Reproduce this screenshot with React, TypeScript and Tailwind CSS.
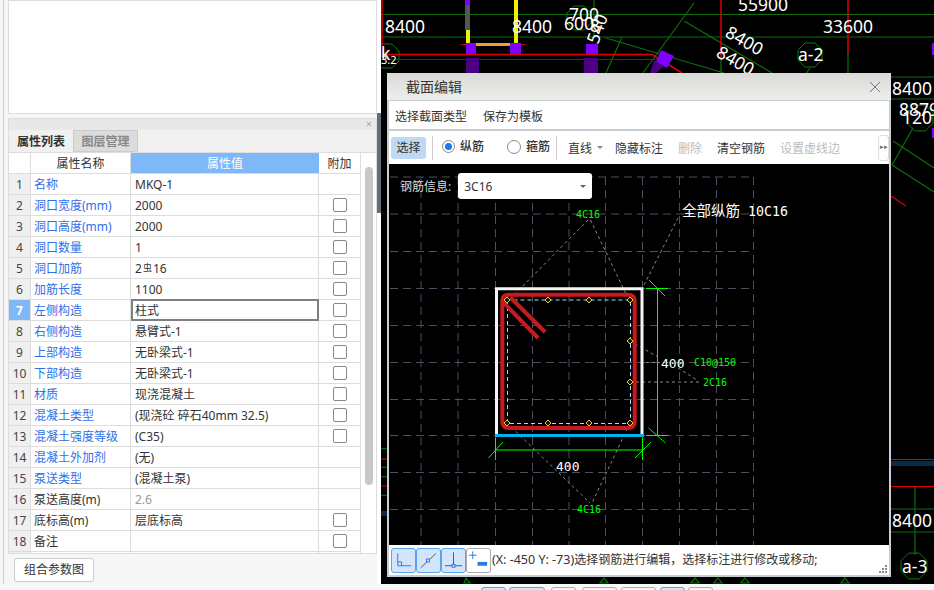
const rows: { name: string; value: string; plain?: boolean; check: boolean }[] = [
  { name: "名称", value: "MKQ-1", check: false },
  { name: "洞口宽度(mm)", value: "2000", check: true },
  { name: "洞口高度(mm)", value: "2000", check: true },
  { name: "洞口数量", value: "1", check: true },
  { name: "洞口加筋", value: "rebar", check: true },
  { name: "加筋长度", value: "1100", check: true },
  { name: "左侧构造", value: "柱式", check: true },
  { name: "右侧构造", value: "悬臂式-1", check: true },
  { name: "上部构造", value: "无卧梁式-1", check: true },
  { name: "下部构造", value: "无卧梁式-1", check: true },
  { name: "材质", value: "现浇混凝土", check: true },
  { name: "混凝土类型", value: "(现浇砼 碎石40mm 32.5)", check: true },
  { name: "混凝土强度等级", value: "(C35)", check: true },
  { name: "混凝土外加剂", value: "(无)", check: false },
  { name: "泵送类型", value: "(混凝土泵)", check: false },
  { name: "泵送高度(m)", value: "2.6", plain: true, check: false },
  { name: "底标高(m)", value: "层底标高", plain: true, check: true },
  { name: "备注", value: "", plain: true, check: true },
];

const cadFont = "'DejaVu Sans Mono','Noto Sans CJK SC',monospace";
const planFont = "'Noto Sans','Noto Sans CJK SC',sans-serif";

const Hex = ({ cx, cy, r }: { cx: number; cy: number; r: number }) => {
  const pts = [0, 1, 2, 3, 4, 5, 6, 7]
    .map((i) => {
      const a = (i * Math.PI) / 4 + Math.PI / 8;
      return `${cx + r * Math.cos(a)},${cy + r * Math.sin(a)}`;
    })
    .join(" ");
  return <polygon points={pts} fill="none" stroke="#0c7a0c" strokeWidth="1" />;
};

const PlanText = ({ x, y, t, rot }: { x: number; y: number; t: string; rot?: number }) => (
  <text
    x={x}
    y={y}
    fill="#fff"
    fontSize="17.5"
    fontFamily={planFont}
    transform={rot ? `rotate(${rot} ${x} ${y})` : undefined}
  >
    {t}
  </text>
);

// 背景平面图
const Plan = () => (
  <svg viewBox="381 0 553 584" className="block w-[553px] h-[584px]">
    <rect x="381" y="0" width="553" height="584" fill="#000" />
    <g stroke="#0c6e0c" strokeWidth="1.2" fill="none">
      <path d="M381 14.5H934M381 37H934M890 77H934M890 99H934M890 509H934M890 532H934" />
      <path d="M848 54V73M721 60V73M594 0V37M606 38L724 73M684 21L772 73M622 37L606 73" />
      <path d="M694 3L643 73M810 68L803 78" />
      <path d="M893 141L934 168M892 165L934 192M892 165L913 128M915 487V555" />
      <path d="M466 578L470 583H464ZM604 578L608 583H600ZM695 578L699 583H691ZM718 578L722 583H714ZM745 578L749 583H741ZM845 578L849 583H841Z" />
    </g>
    <Hex cx={810} cy={55} r={13} />
    <Hex cx={920} cy={118} r={14} />
    <Hex cx={914} cy={566} r={14} />
    <Hex cx={387} cy={56} r={13} />
    <Hex cx={579} cy={18} r={13} />
    <Hex cx={383} cy={458} r={10} />
    <Hex cx={383} cy={486} r={10} />
    <g stroke="#e00000" fill="none">
      <path d="M382 0V56M721 0V60M848 0V54" strokeWidth="1.5" />
      <path d="M381 54.5H652L682 73" strokeWidth="1.5" />
      <path d="M381 59.5H670" strokeWidth="1" stroke="#a00000" />
      <path d="M461 44.5H525" strokeWidth="1" />
      <path d="M890 459.5H934M890 486.5H934M381 459H387M381 486H387" strokeWidth="1.2" />
      <path d="M891 196L906 206" strokeWidth="1.2" />
    </g>
    <rect x="890" y="461" width="44" height="5" fill="#0a2a4a" />
    <rect x="381" y="511" width="8" height="5" fill="#0a2a4a" />
    <rect x="466" y="43" width="10" height="11" fill="#8000ff" />
    <rect x="510" y="43" width="11" height="11" fill="#8000ff" />
    <rect x="586" y="44" width="12" height="10" fill="#8000ff" />
    <rect x="466" y="58" width="13" height="15" fill="#4b0082" />
    <rect x="584" y="58" width="14" height="15" fill="#4b0082" />
    <polygon points="661,50 674,56 667,68 656,62" fill="#8000ff" />
    <polygon points="654,60 664,66 656,73 650,73" fill="#4b0082" />
    <rect x="932" y="43" width="2" height="12" fill="#8000ff" />
    <rect x="932" y="128" width="2" height="10" fill="#8000ff" />
    <rect x="465" y="0" width="5" height="5" fill="#8000ff" />
    <rect x="465" y="5" width="5" height="25" fill="#555" />
    <rect x="466" y="30" width="4" height="13" fill="#f0f000" />
    <rect x="514" y="0" width="4" height="43" fill="#f0f000" />
    <rect x="476" y="43" width="34" height="3" fill="#f0a030" />
    <PlanText x={385} y={33} t="8400" />
    <PlanText x={512} y={33} t="8400" />
    <PlanText x={569} y={21} t="700" />
    <PlanText x={564} y={30} t="600" />
    <PlanText x={590} y={32} t="8" />
    <PlanText x={598} y={45} t="540" rot={-70} />
    <PlanText x={738} y={11} t="55900" />
    <PlanText x={823} y={33} t="33600" />
    <PlanText x={724} y={36} t="8400" rot={30} />
    <PlanText x={715} y={56} t="8400" rot={30} />
    <PlanText x={798} y={61} t="a-2" />
    <PlanText x={892} y={95} t="8400" />
    <PlanText x={899} y={116} t="8879" />
    <PlanText x={902} y={124} t="120" />
    <PlanText x={892} y={527} t="8400" />
    <PlanText x={902} y={573} t="a-3" />
    <PlanText x={381} y={60} t="k" />
    <text x="381" y="64" fill="#fff" fontSize="11" fontFamily={planFont}>
      3.2
    </text>
  </svg>
);

const gridX = [421, 458, 495.5, 532.5, 569, 605.5, 642.5, 679.5, 716.5, 753.5];
const gridY = [177, 214, 251.5, 288.5, 325.5, 362.5, 399.5, 435.5, 472.5, 509.5];
const dots: [number, number][] = [
  [507, 300], [548, 300], [589, 300], [630, 300], [630, 341], [630, 382],
  [507, 423], [548, 423], [589, 423], [630, 423],
];

// 截面图
const Section = () => (
  <svg viewBox="389 164 500 381" className="block w-[500px] h-[381px]">
    <rect x="389" y="164" width="500" height="381" fill="#000" />
    <g stroke="#4a5060" strokeWidth="1" strokeDasharray="8 5" fill="none">
      {gridX.map((x) => (
        <path key={x} d={`M${x} 177V545`} />
      ))}
      {gridY.map((y) => (
        <path key={y} d={`M390 ${y}H754`} />
      ))}
    </g>
    <g stroke="#8a8a8a" strokeWidth="1" strokeDasharray="3 3" fill="none">
      <path d="M588 220L510 299M590.5 220L627 296M678 218L643 287" />
      <path d="M630 341L658 357M678 368L697 380M630 382H700M646 362.5H660" />
      <path d="M507 423L590 503M630 423L592 503" />
    </g>
    <path d="M496.5 435V288.8H642V435" fill="none" stroke="#f5f5f5" strokeWidth="3" />
    <rect x="495" y="434" width="149" height="3" fill="#00b0f0" />
    <g stroke="#aad8ff" strokeWidth="1" strokeDasharray="4 3" fill="none">
      <path d="M507.5 300V423.5H630.5V300H507.5" />
    </g>
    <g stroke="#c8191f" strokeWidth="4" fill="none" strokeLinejoin="round">
      <path d="M509 294.7H628Q634.7 294.7 634.7 301V421Q634.7 428 628 428H509Q502.3 428 502.3 421V301Q502.3 294.7 509 294.7Z" />
      <path d="M503 302L538 338M511 298L545 332" />
    </g>
    {dots.map(([x, y]) => (
      <polygon
        key={`${x}-${y}`}
        points={`${x - 3},${y} ${x},${y - 3} ${x + 3},${y} ${x},${y + 3}`}
        fill="#111"
        stroke="#f0d020"
        strokeWidth="1"
      />
    ))}
    <g stroke="#00ff00" strokeWidth="1" fill="none">
      <path d="M657.5 288V435M646 288.5H668M649 280L665 296M646 435.5H668M648.5 428L665.5 443" />
      <path d="M495.5 450H642.5M495.5 438V460M642.5 438V460M488.5 458L503 442M635 458L651 442" />
    </g>
    <g fontFamily={cadFont}>
      <text x="682" y="216" fill="#fff" fontSize="13.3">
        <tspan fontSize="14.5">全部纵筋</tspan> 10C16
      </text>
      <text x="661" y="368" fill="#fff" fontSize="13">400</text>
      <text x="556" y="471" fill="#fff" fontSize="13">400</text>
      <g fill="#00ff00" fontSize="10">
        <text x="576" y="218">4C16</text>
        <text x="577" y="513">4C16</text>
        <text x="694" y="366">C10@150</text>
        <text x="703" y="386">2C16</text>
      </g>
    </g>
  </svg>
);

const ToolIcon = ({ kind }: { kind: number }) => (
  <svg viewBox="0 0 24 24" className="w-[24px] h-[24px]" fill="none" stroke="#555">
    {kind === 0 && <path d="M6 5V18H20M6 14H10V18" stroke="#2a7ae0" />}
    {kind === 1 && (
      <>
        <path d="M4 20L20 5" />
        <rect x="10" y="11" width="3" height="3" fill="#d3e5fb" stroke="#2a7ae0" />
      </>
    )}
    {kind === 2 && (
      <>
        <path d="M12 4V17M3 18H21" />
        <rect x="10.5" y="16.5" width="3" height="3" fill="#d3e5fb" stroke="#2a7ae0" />
      </>
    )}
    {kind === 3 && (
      <>
        <path d="M2 7H10M6 3V11" stroke="#2a7ae0" />
        <rect x="11" y="14" width="10" height="4" fill="#2a7ae0" stroke="none" />
      </>
    )}
  </svg>
);

const Cell = ({ value, selected }: { value: string; selected: boolean }) => {
  if (selected) {
    return (
      <div className="w-[188px] h-[22px] -mt-[1px] border-2 border-[#808080] bg-white flex items-center pl-[2px] pt-[1px] text-[#333]">
        {value}
      </div>
    );
  }
  return (
    <div
      className={`w-[188px] border-r border-[#ddd] flex items-center pl-[4px] pt-[1px] ${
        value === "2.6" ? "text-[#999]" : "text-[#333]"
      }`}
    >
      {value === "rebar" ? (
        <span>
          2<span className="text-[9px] align-[2px] px-[1px]">虫</span>16
        </span>
      ) : (
        value
      )}
    </div>
  );
};

export default function App() {
  return (
    <div className="w-[934px] h-[590px] overflow-hidden bg-[#f8f8f8] text-[12px] font-['Noto_Sans','Noto_Sans_CJK_SC',sans-serif]">
      <div className="flex h-[584px]">
        {/* 左侧属性面板 */}
        <div className="w-[381px] h-full shrink-0 flex bg-[#f6f6f6] pl-[3px]">
          <div className="w-[374px] border-l border-[#d0d0d0] pl-[4px] flex flex-col">
            <div className="w-[369px] h-[114px] shrink-0 bg-white border border-[#ddd]" />
            <div className="w-[369px] h-[436px] shrink-0 mt-[4px] border border-[#ddd] bg-white flex flex-col">
              <div className="h-[11px] shrink-0 bg-[#e8e8e8] flex items-center justify-end pr-[4px] text-[#aaa] text-[11px]">
                ×
              </div>
              <div className="h-[23px] shrink-0 bg-[#f0f0f0] flex border-b border-[#ddd]">
                <div className="w-[64px] flex items-center justify-center pt-[1px] font-semibold text-[#333]">属性列表</div>
                <div className="w-[65px] flex items-center justify-center pt-[1px] font-semibold text-[#888] bg-[#dcdcdc] border border-[#ccc]">
                  图层管理
                </div>
              </div>
              <div className="flex flex-1 overflow-hidden">
                <div className="w-[352px] border-r border-[#ddd]">
                  <div className="flex h-[21px] border-b border-[#ddd]">
                    <div className="w-[22px] border-r border-[#ddd]" />
                    <div className="w-[100px] border-r border-[#ddd] flex items-center justify-center pt-[1px] text-[#333]">
                      属性名称
                    </div>
                    <div className="w-[188px] bg-[#7fb8f8] text-white flex items-center justify-center pt-[1px]">属性值</div>
                    <div className="flex-1 flex items-center justify-center pt-[1px] text-[#333]">附加</div>
                  </div>
                  {rows.map((row, i) => (
                    <div key={i} className="flex h-[21px] border-b border-[#ddd]">
                      <div
                        className={`w-[22px] border-r border-[#ddd] flex items-center justify-center pt-[1px] ${
                          i === 6 ? "bg-[#7fb8f8] text-white font-bold" : "bg-[#f0f0f0] text-[#444]"
                        }`}
                      >
                        {i + 1}
                      </div>
                      <div
                        className={`w-[100px] border-r border-[#ddd] flex items-center pl-[3px] pt-[1px] ${
                          row.plain ? "text-[#333]" : "text-[#2f6fe8]"
                        }`}
                      >
                        {row.name}
                      </div>
                      <Cell value={row.value} selected={i === 6} />
                      <div className="flex-1 flex items-center justify-center">
                        {row.check && <div className="w-[14px] h-[14px] rounded-[2px] border border-[#888] bg-white" />}
                      </div>
                    </div>
                  ))}
                  <div className="flex h-[21px]">
                    <div className="w-[22px] border-r border-[#ddd] bg-[#f0f0f0]" />
                    <div className="w-[100px] border-r border-[#ddd]" />
                    <div className="w-[188px] border-r border-[#ddd]" />
                  </div>
                </div>
                <div className="flex-1 flex justify-center pt-[14px]">
                  <div className="w-[8px] h-[318px] rounded-full bg-[#c8c8c8]" />
                </div>
              </div>
            </div>
            <div className="mt-[4px]">
              <button className="ml-[6px] w-[80px] h-[24px] rounded-[3px] bg-white border border-[#ccc] text-[#333]">
                组合参数图
              </button>
            </div>
          </div>
          <div className="w-[4px] bg-white">
            <div className="mt-[113px] h-[100px] bg-[#5f6e7c]" />
          </div>
        </div>

        {/* 右侧绘图区 */}
        <div className="relative w-[553px] h-full">
          <Plan />
          <div className="absolute left-[6px] top-[73px] w-[504px] h-[504px] bg-[#c9cdd1] flex flex-col px-[2px] pb-[2px]">
            <div className="-mx-[2px] h-[27px] bg-gradient-to-b from-[#d9d9d7] to-[#eeeeec] flex items-center justify-between pl-[19px] pr-[10px] text-[14px] text-[#333]">
              <span>截面编辑</span>
              <svg viewBox="0 0 12 12" className="w-[12px] h-[12px]" stroke="#777" strokeWidth="1">
                <path d="M1 1L11 11M11 1L1 11" />
              </svg>
            </div>
            <div className="h-[28px] mt-[1px] bg-white flex items-center gap-[16px] pl-[6px] pt-[3px] text-[#333]">
              <span>选择截面类型</span>
              <span>保存为模板</span>
            </div>
            <div className="h-[33px] mt-[2px] bg-white flex items-center text-[#333] whitespace-nowrap">
              <div className="ml-[2px] w-[35px] h-[22px] rounded-[3px] bg-[#bfd9f2] flex items-center justify-center pt-[1px]">
                选择
              </div>
              <div className="w-px h-[24px] bg-[#ccc] ml-[6px]" />
              <div className="ml-[9px] mb-[2px] w-[13px] h-[13px] rounded-full border border-[#888] flex items-center justify-center">
                <div className="w-[7px] h-[7px] rounded-full bg-[#1a7ae8]" />
              </div>
              <span className="ml-[5px] mb-[2px] font-medium">纵筋</span>
              <div className="ml-[23px] mb-[2px] w-[14px] h-[14px] rounded-full border border-[#888]" />
              <span className="ml-[5px] mb-[2px] font-medium">箍筋</span>
              <div className="w-px h-[24px] bg-[#ccc] ml-[6px]" />
              <span className="ml-[11px] pt-[2px]">直线</span>
              <span className="ml-[5px] w-0 h-0 border-x-[3px] border-x-transparent border-t-[3px] border-t-[#888]" />
              <span className="ml-[12px] pt-[2px]">隐藏标注</span>
              <span className="ml-[15px] pt-[2px] text-[#bbb]">删除</span>
              <span className="ml-[15px] pt-[2px]">清空钢筋</span>
              <span className="ml-[15px] pt-[2px] text-[#bbb]">设置虚线边</span>
              <div className="ml-[38px] w-[11px] h-[26px] rounded-[3px] border border-[#ddd] flex items-center justify-center text-[7px] text-[#666]">
                ▸▸
              </div>
            </div>
            <div className="relative h-[381px] bg-black">
              <Section />
              <div className="absolute left-[11px] top-[9px] flex items-center gap-[7px] text-[#ddd]">
                <span className="pt-[1px]">钢筋信息:</span>
                <div className="w-[134px] h-[26px] rounded-[3px] bg-white text-[#333] flex items-center justify-between px-[6px]">
                  <span className="pt-[1px]">3C16</span>
                  <span className="w-0 h-0 border-x-[3px] border-x-transparent border-t-[3px] border-t-[#666]" />
                </div>
              </div>
            </div>
            <div className="flex-1 bg-white flex items-center pl-[2px] text-[#333] relative">
              {[0, 1, 2, 3].map((k) => (
                <div
                  key={k}
                  className={`w-[25px] h-[25px] rounded-[3px] border flex items-center justify-center ${
                    k === 3 ? "border-[#aaa] bg-white" : "border-[#5ba2f0] bg-[#d3e5fb]"
                  }`}
                >
                  <ToolIcon kind={k} />
                </div>
              ))}
              <span className="ml-[1px]">
                <span className="text-[12.5px]">(X: -450 Y: -73)</span>选择钢筋进行编辑，选择标注进行修改或移动;
              </span>
              <div className="absolute right-[2px] bottom-[2px] grid grid-cols-3 gap-[1px]">
                {[0, 1, 2, 3, 4, 5, 6, 7, 8].map((d) => (
                  <span key={d} className={`w-[2px] h-[2px] ${[0, 1, 3].includes(d) ? "" : "bg-[#888]"}`} />
                ))}
              </div>
            </div>
          </div>
        </div>
      </div>

      {/* 底部被裁切的按钮 */}
      <div className="h-[6px] pl-[481px] pt-[3px] flex overflow-hidden">
        <div className="w-[25px] h-[20px] shrink-0 rounded-[3px] border border-[#5ba2f0] bg-[#d3e5fb]" />
        <div className="w-[36px] h-[20px] shrink-0 ml-[3px] rounded-[3px] border border-[#5ba2f0] bg-[#d3e5fb]" />
        <div className="w-[25px] h-[20px] shrink-0 ml-[6px] rounded-[3px] border border-[#aaa]" />
        <div className="w-[35px] h-[20px] shrink-0 ml-[6px] rounded-[3px] border border-[#aaa]" />
        <div className="w-[35px] h-[20px] shrink-0 ml-[4px] rounded-[3px] border border-[#aaa]" />
        <div className="w-[25px] h-[20px] shrink-0 ml-[4px] rounded-[3px] border border-[#5ba2f0] bg-[#d3e5fb]" />
        <div className="w-[25px] h-[20px] shrink-0 ml-[3px] rounded-[3px] border border-[#aaa]" />
      </div>
    </div>
  );
}
